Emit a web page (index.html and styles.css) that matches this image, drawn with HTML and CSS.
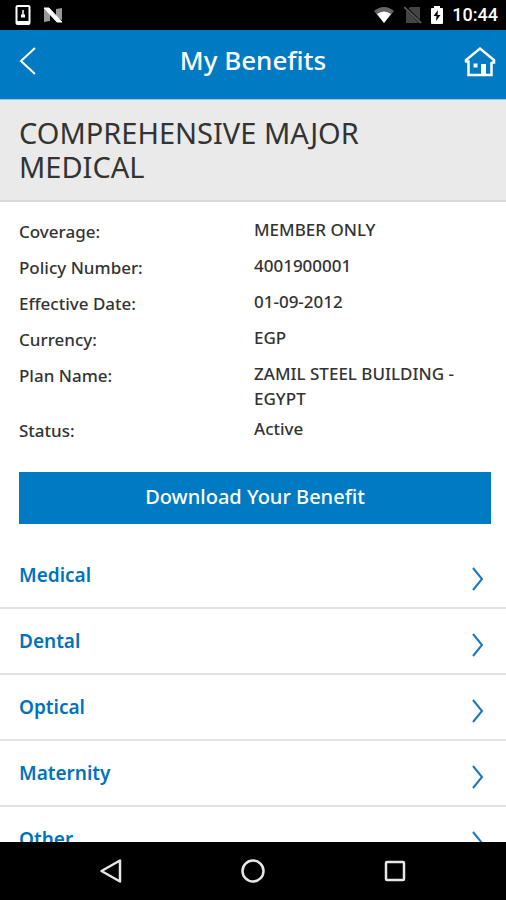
FILE: index.html
```html
<!DOCTYPE html>
<html lang="en">
<head>
<meta charset="utf-8">
<meta name="viewport" content="width=device-width, initial-scale=1">
<title>My Benefits</title>
<link rel="stylesheet" href="styles.css">
</head>
<body>
<div class="screen">
  <div class="status-bar">
    <div class="status-group status-left">
      <svg width="16" height="20" viewBox="0 0 16 20" fill="none" stroke="#fff"><rect x="1.500" y="1" width="13" height="18" rx="1" stroke-width="2"/><path d="M2 17.500h12" stroke-width="3"/><path d="M8 5v6" stroke-width="1.500"/><path d="M6 9.500h4v3H6z" fill="#fff" stroke="none"/></svg>
      <svg width="20" height="16" viewBox="0 0 20 16"><path d="M1 2l6 2v10l-6 1zM13 2l6-1v12l-6-2z" fill="#999"/><path d="M1 1h5l13 14h-5z" fill="#fff" stroke="#fff"/></svg>
    </div>
    <div class="status-group status-right">
      <svg width="22" height="18" viewBox="0 0 22 18"><path d="M1 5Q11-3 21 5L11 17z" fill="#666"/><path d="M4 8Q11 3 18 8L11 17z" fill="#fff"/></svg>
      <svg width="18" height="18" viewBox="0 0 18 18"><path d="M2 5l4-4h10v16H2z" fill="#444"/><path d="M1 1l16 16" stroke="#000" stroke-width="3"/><path d="M0 1l17 16" stroke="#555" stroke-width="2"/></svg>
      <svg width="12" height="18" viewBox="0 0 12 18"><path d="M0 3q0-1 1-1h2V0h6v2h2q1 0 1 1v14q0 1-1 1H1q-1 0-1-1z" fill="#fff"/><path d="M7 4l-4.500 6H5.500L5 15l4.500-6H6.500z" fill="#000"/></svg>
      <span class="clock">10:44</span>
    </div>
  </div>

  <header class="app-header">
    <button class="icon-button" type="button" aria-label="Back">
      <svg width="18" height="28" viewBox="0 0 18 28" fill="none" stroke="#fff" stroke-width="2"><path d="M17 1L3 14l14 13"/></svg>
    </button>
    <h1>My Benefits</h1>
    <a class="icon-button home" href="#" aria-label="Home">
      <svg width="32" height="32" viewBox="0 0 32 32" fill="none" stroke="#fff" stroke-width="2.500"><path d="M2 17.500v-2.500L16 3.500l14 11.500v2.500h-2.500"/><path d="M2 16.500h2.500v13.500h23V17"/><path d="M17 19h5v11h-5z" fill="#fff" stroke="none"/><path d="M9.500 18.500h4v4h-4z" fill="#fff" stroke="none"/></svg>
    </a>
  </header>

  <h2 class="plan-title">COMPREHENSIVE MAJOR MEDICAL</h2>

  <main class="content">
    <dl class="details">
      <div><dt>Coverage:</dt><dd>MEMBER ONLY</dd></div>
      <div><dt>Policy Number:</dt><dd>4001900001</dd></div>
      <div><dt>Effective Date:</dt><dd>01-09-2012</dd></div>
      <div><dt>Currency:</dt><dd>EGP</dd></div>
      <div><dt>Plan Name:</dt><dd>ZAMIL STEEL BUILDING - EGYPT</dd></div>
      <div><dt>Status:</dt><dd>Active</dd></div>
    </dl>
    <button class="download" type="button">Download Your Benefit</button>
    <nav class="benefits" aria-label="Benefits">
      <a href="#">Medical<svg width="12" height="24" viewBox="0 0 12 24"><path d="M1 1l9 11-9 11"/></svg></a>
      <a href="#">Dental<svg width="12" height="24" viewBox="0 0 12 24"><path d="M1 1l9 11-9 11"/></svg></a>
      <a href="#">Optical<svg width="12" height="24" viewBox="0 0 12 24"><path d="M1 1l9 11-9 11"/></svg></a>
      <a href="#">Maternity<svg width="12" height="24" viewBox="0 0 12 24"><path d="M1 1l9 11-9 11"/></svg></a>
      <a href="#">Other<svg width="12" height="24" viewBox="0 0 12 24"><path d="M1 1l9 11-9 11"/></svg></a>
    </nav>
  </main>

  <div class="system-nav">
    <button type="button" aria-label="System back"><svg width="24" height="24" viewBox="0 0 24 24"><path d="M21 1.500v21L2.500 12z"/></svg></button>
    <button type="button" aria-label="System home"><svg width="24" height="24" viewBox="0 0 24 24"><circle cx="12" cy="12" r="10.500"/></svg></button>
    <button type="button" aria-label="Recent apps"><svg width="24" height="24" viewBox="0 0 24 24"><rect x="3" y="3" width="18" height="18" rx="1"/></svg></button>
  </div>
</div>
</body>
</html>
```
FILE: styles.css
```css
* { box-sizing: border-box; }

body {
  margin: 0;
  background: #fff;
  color: #333;
  font-family: "Noto Sans", "Open Sans", sans-serif;
}

h1, h2, dl, dd { margin: 0; }
button { padding: 0; border: 0; background: none; font: inherit; }
svg { display: block; flex: none; }

.screen {
  display: flex;
  flex-direction: column;
  height: 100vh;
  overflow: hidden;
}

.status-bar {
  display: flex;
  flex: none;
  align-items: center;
  justify-content: space-between;
  height: 30px;
  padding: 0 8px 0 15px;
  background: #000;
  color: #fff;
}
.status-group { display: flex; align-items: center; }
.status-left { gap: 12px; }
.status-right { gap: 9px; }
.clock {
  font: 500 18px/30px Roboto, sans-serif;
}

.app-header {
  display: grid;
  grid-template-columns: 48px 1fr 48px;
  align-items: center;
  flex: none;
  height: 70px;
  padding: 0 10px 8px;
  border-bottom: 1px solid #9fc3e6;
  background: #007bc3;
  color: #fff;
}
.app-header h1 {
  padding-bottom: 2px;
  font-size: 26px;
  font-weight: 500;
  line-height: 36px;
  text-align: center;
}
.icon-button {
  display: flex;
  align-items: center;
  height: 48px;
  padding-left: 8px;
}
.home { justify-content: flex-end; }

.plan-title {
  flex: none;
  padding: 16px 100px 16px 19px;
  border-bottom: 2px solid #d8d8d8;
  background: #eaeaea;
  font-size: 29px;
  font-weight: 400;
  line-height: 34px;
}

.content {
  flex: 1;
  min-height: 0;
  overflow-y: auto;
  scrollbar-width: none;
}

.details {
  display: grid;
  gap: 5px;
  padding: 15px 17px 0 19px;
  font-size: 17px;
  font-weight: 500;
}
.details div {
  display: grid;
  grid-template-columns: 1fr 1fr;
}
.details dt { padding-bottom: 2px; line-height: 29px; }
.details dd { line-height: 25px; }

.download {
  display: block;
  width: calc(100% - 34px);
  height: 52px;
  margin: 25px 15px 0 19px;
  padding-bottom: 4px;
  background: #007bc3;
  color: #fff;
  font-size: 20px;
  font-weight: 500;
}

.benefits { margin-top: 19px; }
.benefits a {
  display: flex;
  align-items: center;
  justify-content: space-between;
  height: 66px;
  padding: 0 22px 0 19px;
  border-bottom: 2px solid #e2e2e2;
  color: #0072bd;
  font-size: 19px;
  font-weight: 600;
  text-decoration: none;
}
.benefits svg {
  margin-top: 8px;
  fill: none;
  stroke: #1b76bd;
  stroke-width: 2;
}

.system-nav {
  display: flex;
  flex: none;
  align-items: center;
  justify-content: space-around;
  height: 58px;
  padding: 0 40px;
  background: #000;
}
.system-nav svg {
  fill: none;
  stroke: #e6e6e6;
  stroke-width: 2.5;
  stroke-linejoin: round;
}
```
